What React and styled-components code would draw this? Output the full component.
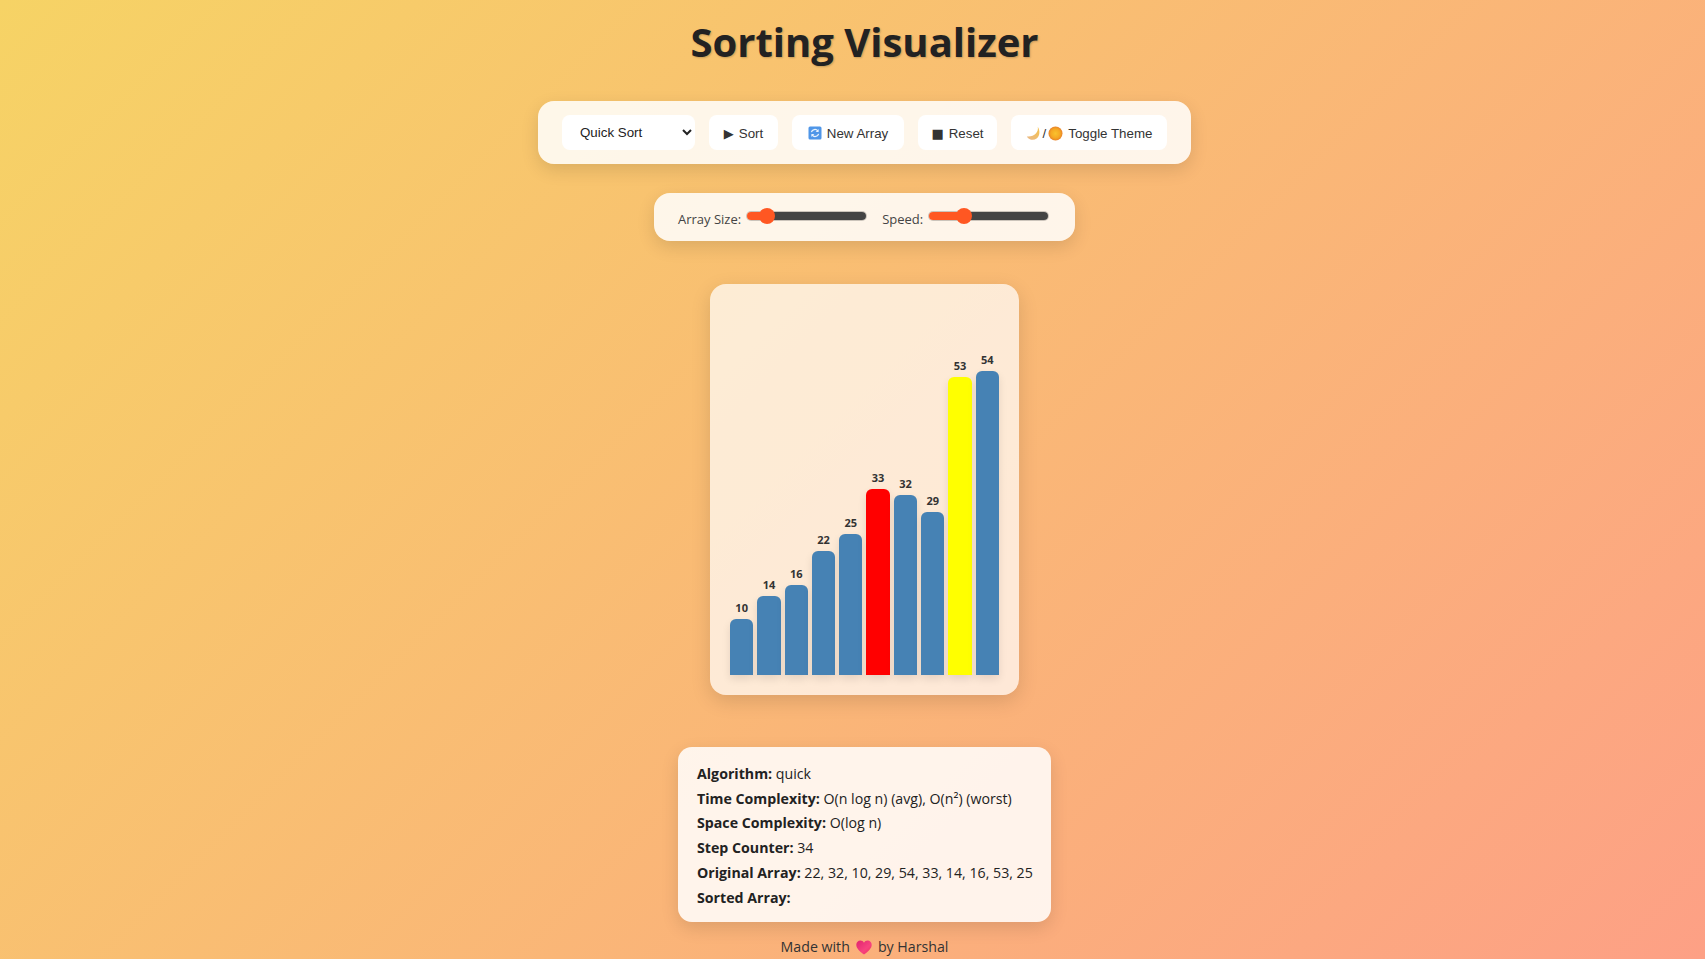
import styled, { createGlobalStyle } from 'styled-components';

const GlobalStyle = createGlobalStyle`
  html, body {
    margin: 0;
    padding: 0;
  }
  body {
    min-height: 959px;
    overflow: hidden;
    background: linear-gradient(135deg, #f6d365 0%, #fda085 100%);
    font-family: "Open Sans", "Noto Sans", sans-serif;
    color: #222;
  }
`;

const bars = [
  { value: 10 },
  { value: 14 },
  { value: 16 },
  { value: 22 },
  { value: 25 },
  { value: 33, state: 'pivot' },
  { value: 32 },
  { value: 29 },
  { value: 53, state: 'compare' },
  { value: 54 },
];

const barColors = { pivot: '#ff0000', compare: '#ffff00' };

const Page = styled.div`
  display: flex;
  flex-direction: column;
  align-items: center;
  box-sizing: border-box;
  height: 959px;
  padding-left: 24px;
`;

const Title = styled.h1`
  margin: 14px 0 0;
  height: 56px;
  font-size: 40px;
  line-height: 56px;
  font-weight: 700;
  color: #222;
  text-shadow: 1px 1px 2px rgba(0, 0, 0, 0.2);
`;

const Panel = styled.div`
  display: flex;
  background: rgba(255, 255, 255, 0.85);
  border-radius: 16px;
  box-shadow: 0 6px 18px rgba(0, 0, 0, 0.12);
`;

const Controls = styled(Panel)`
  margin-top: 31px;
  width: 653px;
  height: 63px;
  box-sizing: border-box;
  padding: 14px 24px;
  gap: 14px;
  align-items: flex-start;
`;

const Select = styled.select`
  width: 133px;
  height: 35px;
  padding: 0 14px;
  border: none;
  border-radius: 8px;
  background: #fff;
  font-family: "Liberation Sans", Arial, sans-serif;
  font-size: 13.33px;
  color: #222;
`;

const Button = styled.button`
  display: inline-flex;
  align-items: center;
  justify-content: center;
  gap: 5px;
  width: ${(p) => p.$width}px;
  height: 35px;
  padding: 1px 0 0;
  border: none;
  border-radius: 8px;
  background: #fff;
  font-family: "Liberation Sans", Arial, sans-serif;
  font-size: 13.33px;
  color: #333;
`;

const ThemeIcons = styled.span`
  display: inline-flex;
  align-items: center;
  gap: 2px;
`;

const Sliders = styled(Panel)`
  margin-top: 29px;
  width: 421px;
  height: 48px;
  box-sizing: border-box;
  padding: 0 24px;
  gap: 16px;
  align-items: center;
`;

const SliderLabel = styled.label`
  display: flex;
  align-items: flex-start;
  gap: 6px;
  font-size: 13px;
  line-height: 20px;
  color: #444;
`;

const LabelText = styled.span`
  margin-top: 4px;
`;

const Range = styled.input`
  appearance: none;
  -webkit-appearance: none;
  display: block;
  width: 119px;
  height: 8px;
  margin: 7px 0 0;
  border-radius: 5px;
  outline: none;
  box-shadow: 0 0 0 1px rgba(0, 0, 0, 0.2);
  background: linear-gradient(
    to right,
    #ff5722 ${(p) => p.$fill}%,
    #444 ${(p) => p.$fill}%
  );

  &::-webkit-slider-thumb {
    -webkit-appearance: none;
    width: 16px;
    height: 16px;
    border-radius: 50%;
    background: #ff5722;
  }
`;

const ChartCard = styled.div`
  margin-top: 43px;
  width: 309px;
  height: 411px;
  box-sizing: border-box;
  padding: 0 20px 20px;
  display: flex;
  align-items: flex-end;
  gap: 4px;
  background: rgba(255, 255, 255, 0.7);
  border-radius: 16px;
  box-shadow: 0 6px 20px rgba(0, 0, 0, 0.13);
`;

const Bar = styled.div`
  position: relative;
  flex: 1;
  height: ${(p) => p.$value * 5.63}px;
  background: ${(p) => barColors[p.$state] || '#4682b4'};
  border-radius: 6px 6px 0 0;
  box-shadow: 0 4px 8px rgba(0, 0, 0, 0.1);
`;

const BarValue = styled.span`
  position: absolute;
  top: -18px;
  left: 0;
  right: 0;
  text-align: center;
  font-size: 11px;
  line-height: 14px;
  font-weight: 700;
  color: #333;
`;

const InfoBox = styled.div`
  margin-top: 52px;
  width: 373px;
  height: 175px;
  box-sizing: border-box;
  padding: 15px 19px;
  background: rgba(255, 255, 255, 0.85);
  border-radius: 14px;
  box-shadow: 0 6px 18px rgba(0, 0, 0, 0.12);
  font-size: 14.2px;
  line-height: 24.7px;
  color: #222;
`;

const InfoRow = styled.div`
  white-space: nowrap;
  strong {
    font-weight: 700;
  }
`;

const Footer = styled.footer`
  margin-top: 15px;
  display: flex;
  align-items: center;
  gap: 6px;
  font-size: 14.2px;
  line-height: 20px;
  color: #333;
`;

const Glyph = styled.span`
  font-family: "DejaVu Sans", sans-serif;
  font-size: 13px;
  line-height: 1;
  color: #333;
`;

const RefreshIcon = () => (
  <svg width="14" height="14" viewBox="0 0 14 14">
    <rect x="0.5" y="0.5" width="13" height="13" rx="1.5" fill="#4f96e8" />
    <path d="M3.4 6.2A3.7 3.7 0 0 1 9.8 4.8" fill="none" stroke="#eaf3fd" strokeWidth="1.3" />
    <path d="M10.6 3v3h-3z" fill="#eaf3fd" />
    <path d="M10.6 7.8A3.7 3.7 0 0 1 4.2 9.2" fill="none" stroke="#eaf3fd" strokeWidth="1.3" />
    <path d="M3.4 11V8h3z" fill="#eaf3fd" />
  </svg>
);

const MoonIcon = () => (
  <svg width="15" height="15" viewBox="0 0 15 15">
    <defs>
      <linearGradient id="moonFill" x1="0" y1="1" x2="1" y2="0">
        <stop offset="0" stopColor="#e9b98a" />
        <stop offset="1" stopColor="#f6c14a" />
      </linearGradient>
    </defs>
    <path d="M11.8.8c1 5.6-3.4 10.2-11 9.6 2 3.4 6.6 4.4 9.8 2.2 3.4-2.4 3.6-8 1.2-11.8z" fill="url(#moonFill)" />
  </svg>
);

const SunIcon = () => (
  <svg width="15" height="15" viewBox="0 0 15 15">
    <defs>
      <radialGradient id="sunFill">
        <stop offset="0" stopColor="#f9c22e" />
        <stop offset="0.65" stopColor="#f6a823" />
        <stop offset="1" stopColor="#e8832a" />
      </radialGradient>
    </defs>
    <circle cx="7.5" cy="7.5" r="7" fill="url(#sunFill)" />
  </svg>
);

const HeartIcon = () => (
  <svg width="16" height="15" viewBox="0 0 16 15">
    <defs>
      <linearGradient id="heartFill" x1="0" y1="0" x2="1" y2="1">
        <stop offset="0" stopColor="#e0246f" />
        <stop offset="0.6" stopColor="#f7437f" />
        <stop offset="1" stopColor="#f0305c" />
      </linearGradient>
    </defs>
    <path d="M8 14.5C3 11 .3 8 .3 4.8.3 2.2 2.2.5 4.4.5 6 .5 7.3 1.4 8 2.8 8.7 1.4 10 .5 11.6.5c2.2 0 4.1 1.7 4.1 4.3C15.7 8 13 11 8 14.5z" fill="url(#heartFill)" />
  </svg>
);

const App = () => {
  return (
    <Page>
      <GlobalStyle />
      <Title>Sorting Visualizer</Title>
      <Controls>
        <Select defaultValue="quick">
          <option value="quick">Quick Sort</option>
        </Select>
        <Button $width={69}><Glyph>▶</Glyph> Sort</Button>
        <Button $width={112}><RefreshIcon /> New Array</Button>
        <Button $width={79}><Glyph>■</Glyph> Reset</Button>
        <Button $width={156}>
          <ThemeIcons><MoonIcon />/<SunIcon /></ThemeIcons> Toggle Theme
        </Button>
      </Controls>
      <Sliders>
        <SliderLabel>
          <LabelText>Array Size:</LabelText>
          <Range type="range" min="0" max="100" defaultValue="11" $fill={16} />
        </SliderLabel>
        <SliderLabel>
          <LabelText>Speed:</LabelText>
          <Range type="range" min="0" max="100" defaultValue="26" $fill={29} />
        </SliderLabel>
      </Sliders>
      <ChartCard>
        {bars.map((bar) => (
          <Bar key={bar.value} $value={bar.value} $state={bar.state}>
            <BarValue>{bar.value}</BarValue>
          </Bar>
        ))}
      </ChartCard>
      <InfoBox>
        <InfoRow><strong>Algorithm:</strong> quick</InfoRow>
        <InfoRow><strong>Time Complexity:</strong> O(n log n) (avg), O(n²) (worst)</InfoRow>
        <InfoRow><strong>Space Complexity:</strong> O(log n)</InfoRow>
        <InfoRow><strong>Step Counter:</strong> 34</InfoRow>
        <InfoRow><strong>Original Array:</strong> 22, 32, 10, 29, 54, 33, 14, 16, 53, 25</InfoRow>
        <InfoRow><strong>Sorted Array:</strong></InfoRow>
      </InfoBox>
      <Footer>Made with <HeartIcon /> by Harshal</Footer>
    </Page>
  );
};

export default App;
